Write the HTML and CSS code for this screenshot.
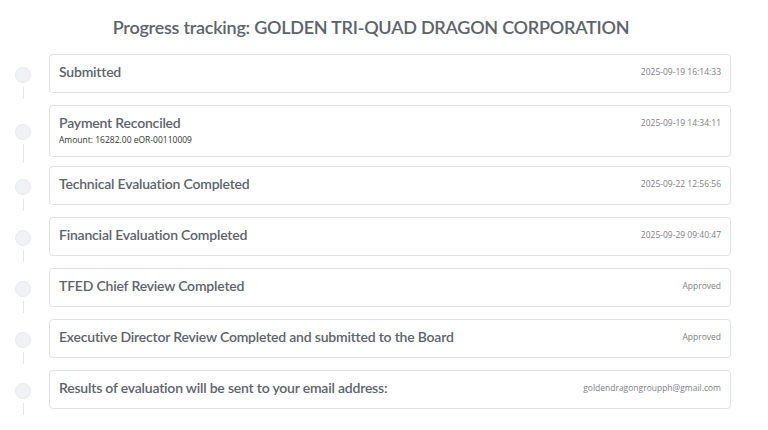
FILE: index.html
```html
<!DOCTYPE html>
<html lang="en">
<head>
<meta charset="utf-8">
<title>Progress tracking</title>
<link rel="stylesheet" href="styles.css">
</head>
<body>
<div class="page">
  <h1 class="page-title">Progress tracking: GOLDEN TRI-QUAD DRAGON CORPORATION</h1>
  <ul class="timeline">
    <li class="step">
      <div class="step-row">
        <div class="marker"><span class="dot"></span></div>
        <div class="card">
          <div class="card-main"><div class="step-title">Submitted</div></div>
          <div class="step-meta">2025-09-19 16:14:33</div>
        </div>
      </div>
    </li>
    <li class="step">
      <div class="step-row">
        <div class="marker"><span class="dot"></span></div>
        <div class="card">
          <div class="card-main">
            <div class="step-title">Payment Reconciled</div>
            <div class="step-note">Amount: 16282.00 eOR-00110009</div>
          </div>
          <div class="step-meta">2025-09-19 14:34:11</div>
        </div>
      </div>
    </li>
    <li class="step">
      <div class="step-row">
        <div class="marker"><span class="dot"></span></div>
        <div class="card">
          <div class="card-main"><div class="step-title">Technical Evaluation Completed</div></div>
          <div class="step-meta">2025-09-22 12:56:56</div>
        </div>
      </div>
    </li>
    <li class="step">
      <div class="step-row">
        <div class="marker"><span class="dot"></span></div>
        <div class="card">
          <div class="card-main"><div class="step-title">Financial Evaluation Completed</div></div>
          <div class="step-meta">2025-09-29 09:40:47</div>
        </div>
      </div>
    </li>
    <li class="step">
      <div class="step-row">
        <div class="marker"><span class="dot"></span></div>
        <div class="card">
          <div class="card-main"><div class="step-title">TFED Chief Review Completed</div></div>
          <div class="step-meta">Approved</div>
        </div>
      </div>
    </li>
    <li class="step">
      <div class="step-row">
        <div class="marker"><span class="dot"></span></div>
        <div class="card">
          <div class="card-main"><div class="step-title">Executive Director Review Completed and submitted to the Board</div></div>
          <div class="step-meta">Approved</div>
        </div>
      </div>
    </li>
    <li class="step">
      <div class="step-row">
        <div class="marker"><span class="dot"></span></div>
        <div class="card">
          <div class="card-main"><div class="step-title">Results of evaluation will be sent to your email address:</div></div>
          <div class="step-meta">goldendragongroupph@gmail.com</div>
        </div>
      </div>
    </li>
  </ul>
</div>
</body>
</html>
```

FILE: styles.css
```css
* { box-sizing: border-box; }

html, body {
  margin: 0;
  padding: 0;
  background: #ffffff;
}

body {
  font-family: "Open Sans", "Noto Sans", "Liberation Sans", sans-serif;
  color: #5f6670;
}

.page {
  padding: 14px 37px 0 0;
}

.page-title {
  margin: 0 0 14px 0;
  padding-left: 11px;
  font-family: Lato, "Open Sans", sans-serif;
  font-size: 18px;
  line-height: 26px;
  font-weight: 600;
  letter-spacing: -0.25px;
  text-align: center;
  color: #5c636b;
}

.timeline {
  list-style: none;
  margin: 0;
  padding: 0;
}

.step {
  min-height: 51px;
  padding-bottom: 9px;
}

.step-row {
  display: flex;
  align-items: stretch;
}

.marker {
  width: 46px;
  margin-right: 3px;
  display: flex;
  flex-direction: column;
  align-items: center;
}

.marker::before {
  content: "";
  flex: 1;
}

.marker::after {
  content: "";
  flex: 1;
  width: 1px;
  margin-top: 4px;
  margin-bottom: -6px;
  background: #e3e5e8;
}

.dot {
  width: 16px;
  height: 16px;
  border-radius: 50%;
  background: #f1f2f5;
  border: 1px solid #e9ebee;
}

.card {
  flex: 1;
  display: flex;
  justify-content: space-between;
  align-items: flex-start;
  border: 1px solid #dfe1e4;
  border-radius: 4px;
  padding: 6px 9px 10px 9px;
  background: #fff;
}

.step-title {
  font-family: Lato, "Open Sans", sans-serif;
  font-size: 14px;
  line-height: 21px;
  font-weight: 600;
  letter-spacing: -0.2px;
  color: #5c636b;
}

.step-note {
  font-size: 8.5px;
  line-height: 12px;
  margin-top: 1px;
  color: #333;
}

.step-meta {
  font-size: 8.5px;
  line-height: 16px;
  padding-top: 3px;
  color: #7d8186;
  white-space: nowrap;
}
```
